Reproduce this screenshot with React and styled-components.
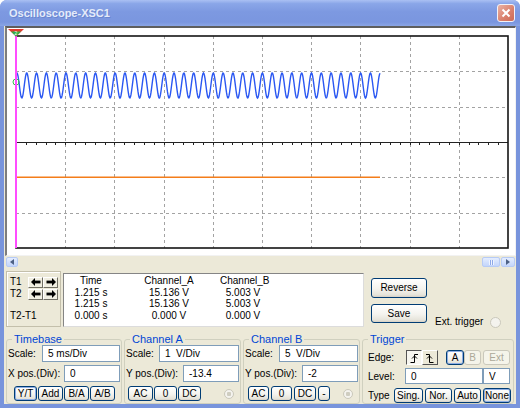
import React from 'react'
import styled, { createGlobalStyle } from 'styled-components'

const GlobalStyle = createGlobalStyle`
  html, body { margin: 0; padding: 0; background: #ffffff; }
  body { font-family: "Liberation Sans", Arial, sans-serif; }
  #root { width: 520px; height: 408px; }
`

function ScopePlot() {
  const x0 = 9
  const y0 = 8
  const pw = 492
  const ph = 212
  const vlines = [...Array(9)].map((_, i) => x0 + ((i + 1) * pw) / 10)
  const hlines = [1, 2, 4, 5].map((j) => y0 + (j * ph) / 6)
  const axisY = y0 + ph / 2
  const ticks = [...Array(49)].map((_, i) => x0 + ((i + 1) * pw) / 50)

  let wave = ''
  for (let x = 0; x <= 364; x += 0.5) {
    const y = 57.5 - 12.5 * Math.cos((2 * Math.PI * (x - 0.9)) / 9.82)
    wave += (x === 0 ? 'M' : 'L') + (x0 + x).toFixed(2) + ' ' + y.toFixed(2) + ' '
  }

  return (
    <svg width="508" height="227" viewBox="0 0 508 227">
      <g stroke="#a3a3a3" strokeWidth="1" strokeDasharray="3 3" shapeRendering="crispEdges">
        {vlines.map((x) => (
          <line key={'v' + x} x1={Math.round(x) + 0.5} y1={y0} x2={Math.round(x) + 0.5} y2={y0 + ph} />
        ))}
        {hlines.map((y) => (
          <line key={'h' + y} x1={x0} y1={Math.round(y) + 0.5} x2={x0 + pw} y2={Math.round(y) + 0.5} />
        ))}
      </g>
      <g stroke="#222" strokeWidth="1" shapeRendering="crispEdges">
        <line x1={x0} y1={axisY + 0.5} x2={x0 + pw} y2={axisY + 0.5} />
        {ticks.map((x) => (
          <line key={'t' + x} x1={Math.round(x) + 0.5} y1={axisY} x2={Math.round(x) + 0.5} y2={axisY + 3} />
        ))}
      </g>
      <line x1={x0} y1="149.2" x2={x0 + 364} y2="149.2" stroke="#f47d1a" strokeWidth="1.4" />
      <path d={wave} fill="none" stroke="#2a57f2" strokeWidth="1.4" />
      <rect x={x0} y={y0} width={pw} height={ph} fill="none" stroke="#151515" strokeWidth="1.6" />
      <circle cx={x0} cy="54" r="3" fill="none" stroke="#33c04a" strokeWidth="1" />
      <line x1={x0} y1="2" x2={x0} y2={y0 + ph} stroke="#ff4cff" strokeWidth="2" />
      <polygon points="1,1 17,1 9,8.5" fill="#e23a2e" />
      <polygon points="4,3.5 14,3.5 9,8.5" fill="#2fb24a" />
      <text x="9" y="7" fontSize="5" fill="#fff" textAnchor="middle" fontFamily="Liberation Sans, Arial, sans-serif">2</text>
    </svg>
  )
}

function Arrow({ dir }) {
  return (
    <svg width="10" height="8" viewBox="0 0 10 8">
      <g transform={dir === 'left' ? '' : 'translate(10 0) scale(-1 1)'}>
        <polygon points="0,4 4,0 4,8" fill="#000" />
        <rect x="3" y="2.6" width="6.5" height="2.8" fill="#000" />
      </g>
    </svg>
  )
}

function EdgeGlyph({ rising }) {
  return (
    <svg width="10" height="10" viewBox="0 0 10 10">
      <g transform={rising ? '' : 'translate(10 0) scale(-1 1)'} stroke="#000" strokeWidth="1" fill="none">
        <path d="M1.5 9.5 H5.5 V1.5 H9" />
        <path d="M3 5.5 L5.5 3 L8 5.5" />
      </g>
    </svg>
  )
}

function Oscilloscope() {
  return (
    <Window>
      <TitleBar>
        <Title>Oscilloscope-XSC1</Title>
        <CloseButton>
          <svg width="10" height="10" viewBox="0 0 10 10">
            <path d="M1.5 1.5 L8.5 8.5 M8.5 1.5 L1.5 8.5" stroke="#fff" strokeWidth="2" />
          </svg>
        </CloseButton>
      </TitleBar>

      <Frame>
        <Screen>
          <ScopePlot />
        </Screen>

        <ScrollRow>
          <ScrollButton $w={12}>
            <svg width="4" height="6" viewBox="0 0 4 6"><polygon points="4,0 4,6 0,3" fill="#4d6185" /></svg>
          </ScrollButton>
          <ScrollEnd>
            <ScrollButton $w={18}>
              <Grip />
            </ScrollButton>
            <ScrollButton $w={14}>
              <svg width="4" height="6" viewBox="0 0 4 6"><polygon points="0,0 0,6 4,3" fill="#4d6185" /></svg>
            </ScrollButton>
          </ScrollEnd>
        </ScrollRow>

        <ReadoutRow>
          <CursorBox>
            <CursorRow>
              <CursorLabel>T1</CursorLabel>
              <ArrowButton><Arrow dir="left" /></ArrowButton>
              <ArrowButton><Arrow dir="right" /></ArrowButton>
            </CursorRow>
            <CursorRow>
              <CursorLabel>T2</CursorLabel>
              <ArrowButton><Arrow dir="left" /></ArrowButton>
              <ArrowButton><Arrow dir="right" /></ArrowButton>
            </CursorRow>
            <DiffLabel>T2-T1</DiffLabel>
          </CursorBox>

          <Readout>
            <span>Time</span><span>Channel_A</span><span>Channel_B</span>
            <span>1.215 s</span><span>15.136 V</span><span>5.003 V</span>
            <span>1.215 s</span><span>15.136 V</span><span>5.003 V</span>
            <span>0.000 s</span><span>0.000 V</span><span>0.000 V</span>
          </Readout>

          <ActionCol>
            <XPButton $w={56} $h={20}>Reverse</XPButton>
            <XPButton $w={56} $h={19}>Save</XPButton>
          </ActionCol>

          <ExtTrigger>
            Ext. trigger
            <Radio $size={11} />
          </ExtTrigger>
        </ReadoutRow>

        <ControlsRow>
          <Group $w={116}>
            <Legend>Timebase</Legend>
            <FieldRow>
              <span>Scale:</span>
              <Field $w={78} readOnly value="5 ms/Div" />
            </FieldRow>
            <FieldRow $mt={3}>
              <span>X pos.(Div):</span>
              <Field $w={56} readOnly value="0" />
            </FieldRow>
            <ButtonRow $pl={6} $gap={1} $mt={4}>
              <XPButton $w={23} $on>Y/T</XPButton>
              <XPButton $w={25}>Add</XPButton>
              <XPButton $w={25}>B/A</XPButton>
              <XPButton $w={25}>A/B</XPButton>
            </ButtonRow>
          </Group>

          <Group $w={117}>
            <Legend>Channel A</Legend>
            <FieldRow>
              <span>Scale:</span>
              <Field $w={80} readOnly value="1  V/Div" />
            </FieldRow>
            <FieldRow $mt={3}>
              <span>Y pos.(Div):</span>
              <Field $w={56} readOnly value="-13.4" />
            </FieldRow>
            <ButtonRow $pl={2} $gap={1} $mt={4}>
              <XPButton $w={25}>AC</XPButton>
              <XPButton $w={23}>0</XPButton>
              <XPButton $w={23}>DC</XPButton>
              <Radio $size={10} $dot $push />
            </ButtonRow>
          </Group>

          <Group $w={117}>
            <Legend>Channel B</Legend>
            <FieldRow>
              <span>Scale:</span>
              <Field $w={79} readOnly value="5  V/Div" />
            </FieldRow>
            <FieldRow $mt={3}>
              <span>Y pos.(Div):</span>
              <Field $w={56} readOnly value="-2" />
            </FieldRow>
            <ButtonRow $pl={3} $gap={2} $mt={4}>
              <XPButton $w={21}>AC</XPButton>
              <XPButton $w={21}>0</XPButton>
              <XPButton $w={22}>DC</XPButton>
              <XPButton $w={12}>-</XPButton>
              <Radio $size={10} $dot $push />
            </ButtonRow>
          </Group>

          <Group $w={152}>
            <Legend>Trigger</Legend>
            <TriggerRow $mt={5}>
              <TriggerLabel $w={38}>Edge:</TriggerLabel>
              <EdgeButton $down><EdgeGlyph rising /></EdgeButton>
              <EdgeButton><EdgeGlyph /></EdgeButton>
              <ButtonRow $pl={8} $gap={0}>
                <XPButton $w={18} $on>A</XPButton>
                <XPButton $w={17} disabled>B</XPButton>
              </ButtonRow>
              <ButtonRow $pl={2}>
                <XPButton $w={27} disabled>Ext</XPButton>
              </ButtonRow>
            </TriggerRow>
            <TriggerRow $mt={3}>
              <TriggerLabel $w={37}>Level:</TriggerLabel>
              <Field $w={78} $h={16} readOnly value="0" />
              <Field $w={27} $h={16} readOnly value="V" />
            </TriggerRow>
            <TriggerRow $mt={4}>
              <TriggerLabel $w={26}>Type</TriggerLabel>
              <ButtonRow $gap={2}>
                <XPButton $w={29}>Sing.</XPButton>
                <XPButton $w={27}>Nor.</XPButton>
                <XPButton $w={27}>Auto</XPButton>
                <XPButton $w={28} $on>None</XPButton>
              </ButtonRow>
            </TriggerRow>
          </Group>
        </ControlsRow>
      </Frame>
    </Window>
  )
}

export default function App() {
  return (
    <>
      <GlobalStyle />
      <Oscilloscope />
    </>
  )
}

const Window = styled.div`
  width: 520px;
  height: 408px;
  display: flex;
  flex-direction: column;
  background: #7894dc;
  border-radius: 7px 7px 0 0;
  overflow: hidden;
  font-family: "Liberation Sans", Arial, sans-serif;
  font-size: 10px;
  color: #000;
`

const TitleBar = styled.div`
  height: 26px;
  flex: none;
  display: flex;
  align-items: center;
  justify-content: space-between;
  padding: 0 5px 0 9px;
  background: linear-gradient(#aac0f3 0%, #8aa6e8 14%, #7d99e1 45%, #7a96df 85%, #8aa5e5 100%);
`

const Title = styled.span`
  color: #e4ebfa;
  font-weight: bold;
  font-size: 11px;
  text-shadow: 1px 1px 0 #6a86cf;
`

const CloseButton = styled.div`
  width: 18px;
  height: 18px;
  box-sizing: border-box;
  border: 1px solid #f2f2f8;
  border-radius: 3px;
  background: linear-gradient(135deg, #eab2a4, #d97f6b 60%, #cc6a55);
  display: flex;
  align-items: center;
  justify-content: center;
`

const Frame = styled.div`
  flex: 1;
  display: flex;
  flex-direction: column;
  margin: 0 4px 4px;
  background: #ece9d8;
`

const Screen = styled.div`
  height: 230px;
  width: 511px;
  margin-left: 1px;
  box-sizing: border-box;
  background: #fff;
  border-style: solid;
  border-width: 2px 1px 1px 2px;
  border-color: #5e5e5e #f2f2f2 #f2f2f2 #7d7d7d;
  overflow: hidden;

  svg {
    display: block;
  }
`

const ScrollRow = styled.div`
  height: 12px;
  display: flex;
  align-items: flex-end;
  justify-content: space-between;
  padding: 0 1px 1px 2px;
  box-sizing: border-box;
`

const ScrollEnd = styled.div`
  display: flex;
  gap: 1px;
`

const ScrollButton = styled.div`
  width: ${(p) => p.$w}px;
  height: 10px;
  box-sizing: border-box;
  border: 1px solid #b7cbf5;
  border-radius: 2px;
  background: linear-gradient(#e4edff, #c3d5fb);
  display: flex;
  align-items: center;
  justify-content: center;
`

const Grip = styled.div`
  width: 5px;
  height: 5px;
  background: repeating-linear-gradient(90deg, #eef3ff 0 1px, #8ea9e8 1px 2px);
`

const ReadoutRow = styled.div`
  height: 63px;
  flex: none;
  display: flex;
  align-items: flex-start;
  padding: 3px 0 0 2px;
  box-sizing: border-box;
`

const CursorBox = styled.div`
  width: 55px;
  height: 56px;
  box-sizing: border-box;
  border: 1px solid #c3bfab;
  box-shadow: inset 1px 1px 0 #fff;
  display: flex;
  flex-direction: column;
  gap: 2px;
  padding: 5px 0 4px 3px;
`

const CursorRow = styled.div`
  display: flex;
  align-items: center;
  height: 10px;
`

const CursorLabel = styled.span`
  width: 18px;
  line-height: 10px;
`

const DiffLabel = styled.span`
  margin-top: auto;
  line-height: 12px;
`

const ArrowButton = styled.div`
  width: 15px;
  height: 11px;
  box-sizing: border-box;
  border: 1px solid;
  border-color: #fff #716f64 #716f64 #fff;
  background: #f1efe2;
  display: flex;
  align-items: center;
  justify-content: center;
`

const Readout = styled.div`
  width: 301px;
  height: 54px;
  margin: 2px 0 0 2px;
  box-sizing: border-box;
  background: #fff;
  border: 1px solid;
  border-color: #858585 #dcdcdc #dcdcdc #858585;
  display: grid;
  grid-template-columns: 54px 102px 46px;
  align-content: start;
  padding-top: 1px;
  line-height: 11.5px;
  text-align: center;
  white-space: nowrap;
`

const ActionCol = styled.div`
  display: flex;
  flex-direction: column;
  gap: 6px;
  margin: 7px 0 0 7px;
`

const ExtTrigger = styled.div`
  align-self: flex-end;
  display: flex;
  align-items: center;
  gap: 7px;
  margin: 0 0 3px 8px;
  line-height: 12px;
`

const Radio = styled.span`
  width: ${(p) => p.$size}px;
  height: ${(p) => p.$size}px;
  box-sizing: border-box;
  border-radius: 50%;
  border: 1px solid #cac8bb;
  background: ${(p) =>
    p.$dot ? 'radial-gradient(circle, #cfcdc0 0 2px, #f4f3ee 2.5px)' : '#f4f3ee'};
  margin-left: ${(p) => (p.$push ? 'auto' : '0')};
  margin-right: ${(p) => (p.$push ? '5px' : '0')};
  flex: none;
`

const ControlsRow = styled.div`
  flex: 1;
  display: flex;
  gap: 2px;
  padding: 2px 0 0 2px;
`

const Group = styled.fieldset`
  margin: 0;
  padding: 0 1px;
  min-width: 0;
  width: ${(p) => p.$w}px;
  box-sizing: border-box;
  border: 1px solid #d0d0bf;
  border-radius: 3px;
  display: flex;
  flex-direction: column;
`

const Legend = styled.legend`
  padding: 0 2px;
  margin-left: 4px;
  color: #0046d5;
  font-size: 11px;
  line-height: 12px;
`

const FieldRow = styled.div`
  display: flex;
  align-items: center;
  justify-content: space-between;
  height: 17px;
  margin-top: ${(p) => p.$mt || 0}px;
  white-space: nowrap;
`

const Field = styled.input`
  width: ${(p) => p.$w}px;
  height: ${(p) => p.$h || 17}px;
  box-sizing: border-box;
  margin: 0;
  padding: 0 5px;
  border: 1px solid #7f9db9;
  background: #fff;
  font-family: "Liberation Sans", Arial, sans-serif;
  font-size: 10px;
  color: #000;
  outline: none;
`

const ButtonRow = styled.div`
  display: flex;
  align-items: center;
  gap: ${(p) => (p.$gap === undefined ? 1 : p.$gap)}px;
  padding-left: ${(p) => p.$pl || 0}px;
  margin-top: ${(p) => p.$mt || 0}px;
`

const XPButton = styled.button`
  box-sizing: border-box;
  width: ${(p) => p.$w}px;
  height: ${(p) => p.$h || 15}px;
  padding: 0;
  margin: 0;
  font-family: "Liberation Sans", Arial, sans-serif;
  font-size: 10px;
  line-height: 1;
  color: ${(p) => (p.disabled ? '#aca899' : '#000')};
  border: 1px solid ${(p) => (p.disabled ? '#cac8bb' : '#003c74')};
  border-radius: 3px;
  background: ${(p) =>
    p.disabled ? '#f5f4ea' : 'linear-gradient(#ffffff, #f4f3ee 55%, #e6e4da 88%, #d6d0c5)'};
  box-shadow: ${(p) => (p.$on ? 'inset 0 0 0 1px #8eaee4' : 'none')};
  display: inline-flex;
  align-items: center;
  justify-content: center;
  flex: none;
`

const TriggerRow = styled.div`
  display: flex;
  align-items: center;
  padding-left: 4px;
  margin-top: ${(p) => p.$mt || 0}px;
`

const TriggerLabel = styled.span`
  width: ${(p) => p.$w}px;
  flex: none;
`

const EdgeButton = styled.div`
  width: 16px;
  height: 15px;
  box-sizing: border-box;
  border: 1px solid;
  border-color: ${(p) => (p.$down ? '#555 #fff #fff #555' : '#fff #555 #555 #fff')};
  background: ${(p) => (p.$down ? '#f7f6f0' : '#ece9d8')};
  display: flex;
  align-items: center;
  justify-content: center;
  flex: none;
`
